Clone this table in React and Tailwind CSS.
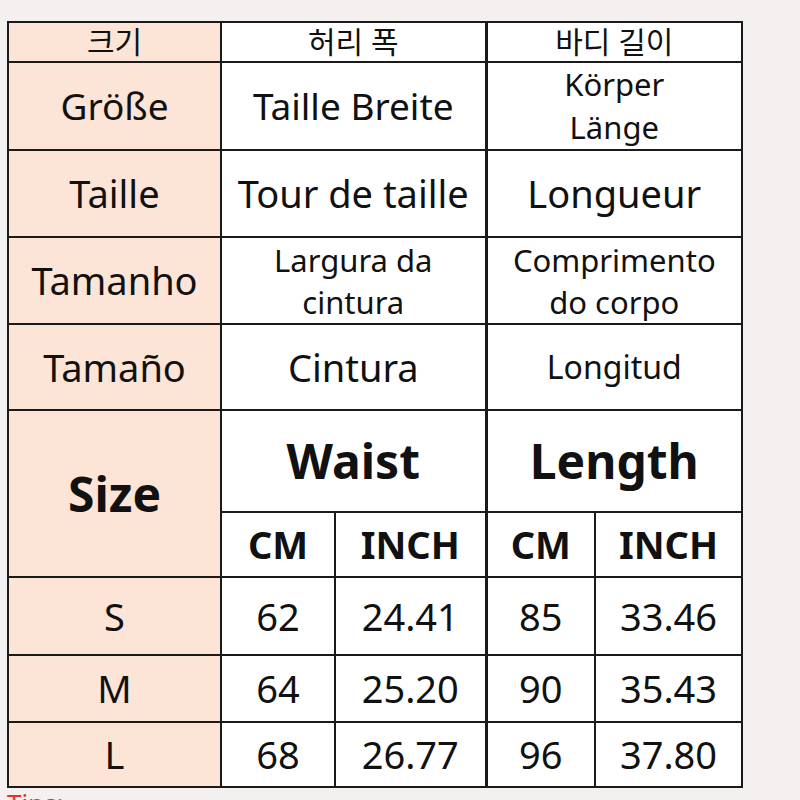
import React from "react";

const F = { fontFamily: '"Noto Sans", "Noto Sans CJK KR", sans-serif' };

export default function App() {
  const peach = "bg-[#fce4d6]";
  const b = "border-2 border-[#1a1a1a] p-0 whitespace-nowrap";
  const mid = "border-l-[3px]";
  return (
    <div className="w-[800px] h-[800px] bg-[#f4f0ef] overflow-hidden text-[#111]" style={F}>
      <div className="pt-[21px] pl-[7px]">
        <table className="border-collapse table-fixed w-[734px] text-center bg-white">
          <colgroup>
            <col className="w-[213px]" />
            <col className="w-[114px]" />
            <col className="w-[151px]" />
            <col className="w-[109px]" />
            <col className="w-[147px]" />
          </colgroup>
          <tbody>
            <tr className="h-[40px]">
              <td className={`${b} ${peach} text-[30px] leading-none`}>크기</td>
              <td colSpan={2} className={`${b} text-[30px] leading-none`}>허리 폭</td>
              <td colSpan={2} className={`${b} ${mid} text-[30px] leading-none`}>바디 길이</td>
            </tr>
            <tr className="h-[88px]">
              <td className={`${b} ${peach} text-[37px]`}>Größe</td>
              <td colSpan={2} className={`${b} text-[37px]`}>Taille Breite</td>
              <td colSpan={2} className={`${b} ${mid} text-[31px] leading-[43px]`}>Körper<br />Länge</td>
            </tr>
            <tr className="h-[87px]">
              <td className={`${b} ${peach} text-[38px]`}>Taille</td>
              <td colSpan={2} className={`${b} text-[38px]`}>Tour de taille</td>
              <td colSpan={2} className={`${b} ${mid} text-[38px]`}>Longueur</td>
            </tr>
            <tr className="h-[87px]">
              <td className={`${b} ${peach} text-[38px]`}>Tamanho</td>
              <td colSpan={2} className={`${b} text-[31px] leading-[42px]`}>Largura da<br />cintura</td>
              <td colSpan={2} className={`${b} ${mid} text-[31px] leading-[42px]`}>Comprimento<br />do corpo</td>
            </tr>
            <tr className="h-[86px]">
              <td className={`${b} ${peach} text-[38px]`}>Tamaño</td>
              <td colSpan={2} className={`${b} text-[38px]`}>Cintura</td>
              <td colSpan={2} className={`${b} ${mid} text-[32px]`}>Longitud</td>
            </tr>
            <tr className="h-[102px]">
              <td rowSpan={2} className={`${b} ${peach} text-[48px] font-bold`}>Size</td>
              <td colSpan={2} className={`${b} text-[48px] font-bold`}>Waist</td>
              <td colSpan={2} className={`${b} ${mid} text-[48px] font-bold`}>Length</td>
            </tr>
            <tr className="h-[65px]">
              <td className={`${b} text-[38px] font-bold`}>CM</td>
              <td className={`${b} text-[38px] font-bold`}>INCH</td>
              <td className={`${b} ${mid} text-[38px] font-bold`}>CM</td>
              <td className={`${b} text-[38px] font-bold`}>INCH</td>
            </tr>
            {[
              ["S", "62", "24.41", "85", "33.46", "h-[78px]"],
              ["M", "64", "25.20", "90", "35.43", "h-[67px]"],
              ["L", "68", "26.77", "96", "37.80", "h-[65px]"],
            ].map((r) => (
              <tr key={r[0]} className={r[5]}>
                <td className={`${b} ${peach} text-[38px]`}>{r[0]}</td>
                <td className={`${b} text-[38px]`}>{r[1]}</td>
                <td className={`${b} text-[38px]`}>{r[2]}</td>
                <td className={`${b} ${mid} text-[38px]`}>{r[3]}</td>
                <td className={`${b} text-[38px]`}>{r[4]}</td>
              </tr>
            ))}
          </tbody>
        </table>
        <div className="text-[26px] leading-none text-[#e5332a] mt-[2px]">Tips:</div>
      </div>
    </div>
  );
}
